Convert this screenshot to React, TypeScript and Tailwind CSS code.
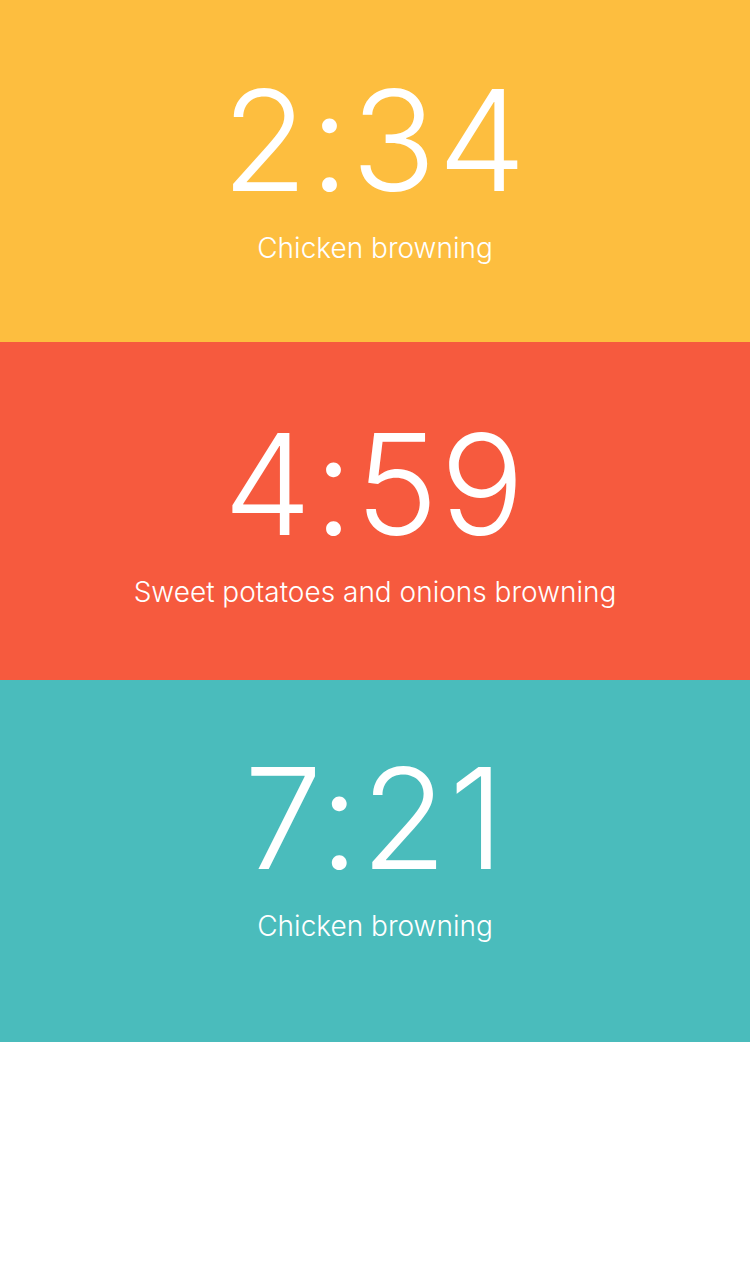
const timers = [
  { time: '2:34', label: 'Chicken browning', bg: 'bg-[#fdbe3f]', h: 'h-[342px]', pt: 'pt-[70px]' },
  { time: '4:59', label: 'Sweet potatoes and onions browning', bg: 'bg-[#f65a3e]', h: 'h-[338px]', pt: 'pt-[72px]' },
  { time: '7:21', label: 'Chicken browning', bg: 'bg-[#4abcbc]', h: 'h-[362px]', pt: 'pt-[68px]' },
]

export default function App() {
  return (
    <div className="min-h-[1266px] w-full bg-white font-['Inter','Liberation_Sans',sans-serif] text-white">
      {timers.map(t => (
        <section key={t.time + t.label} className={`flex flex-col items-center ${t.bg} ${t.h} ${t.pt}`}>
          <div className="text-[140px] leading-none font-light tracking-[2px]">{t.time}</div>
          <div className="mt-[24px] text-[28px] leading-none font-light">{t.label}</div>
        </section>
      ))}
    </div>
  )
}
